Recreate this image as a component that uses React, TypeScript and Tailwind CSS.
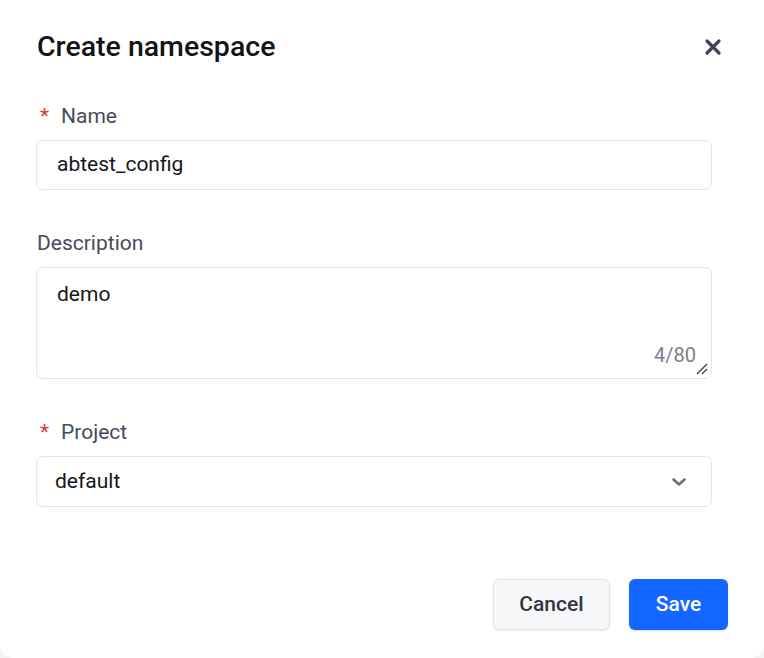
import React from "react";

export default function App() {
  return (
    <div className="w-[764px] h-[658px] bg-[#f3f4f6]" style={{ fontFamily: "Roboto, 'Noto Sans', sans-serif" }}>
      <div className="w-full h-full bg-white rounded-b-[14px] flex flex-col pl-[37px] pr-[52px]">
        <div className="flex items-center justify-between pt-[30px] h-[64px]">
          <h1 className="text-[28.5px] font-medium text-[#111317] leading-none">Create namespace</h1>
          <button className="mr-[-17px] w-[32px] h-[32px] flex items-center justify-center text-[#3f4450]">
            <svg width="18" height="18" viewBox="0 0 18 18" fill="none">
              <path d="M3 3L15 15M15 3L3 15" stroke="currentColor" strokeWidth="3.2" strokeLinecap="round" />
            </svg>
          </button>
        </div>

        <div className="mt-[41px] flex items-center h-[24px] text-[21px] text-[#474b55]">
          <span className="text-[#d93a3a] ml-[3px] mr-[12px]">*</span>
          <span>Name</span>
        </div>
        <div className="mt-[11px] ml-[-1px] h-[50px] border border-[#e3e5e9] rounded-[7px] flex items-center px-[20px] text-[21px] text-[#15171b]">
          abtest_config
        </div>

        <div className="mt-[42px] h-[24px] flex items-center text-[21px] text-[#474b55]">Description</div>
        <div className="mt-[11px] ml-[-1px] h-[112px] border border-[#e3e5e9] rounded-[7px] relative px-[20px] pt-[13px] text-[21px] text-[#15171b]">
          <div className="leading-[26px]">demo</div>
          <div className="absolute right-[15px] bottom-[13px] text-[20px] text-[#7b808a] leading-none">4/80</div>
          <svg className="absolute right-[3px] bottom-[3px]" width="12" height="12" viewBox="0 0 12 12">
            <path d="M11 1L1 11M11 6L6 11" stroke="#3a3d44" strokeWidth="1.3" />
          </svg>
        </div>

        <div className="mt-[42px] flex items-center h-[24px] text-[21px] text-[#474b55]">
          <span className="text-[#d93a3a] ml-[3px] mr-[12px]">*</span>
          <span>Project</span>
        </div>
        <div className="mt-[11px] ml-[-1px] h-[51px] border border-[#e3e5e9] rounded-[7px] flex items-center justify-between pl-[18px] pr-[24px] text-[21px] text-[#15171b]">
          <span>default</span>
          <svg width="16" height="10" viewBox="0 0 16 10" fill="none">
            <path d="M2.5 2.5L8 7.5L13.5 2.5" stroke="#6b7079" strokeWidth="2.6" strokeLinecap="round" strokeLinejoin="round" />
          </svg>
        </div>

        <div className="mt-[72px] flex justify-end gap-[19px] mr-[-16px]">
          <button className="w-[117px] h-[51px] rounded-[6px] bg-[#f6f7f9] border border-[#dfe1e5] shadow-[0_1px_2px_rgba(0,0,0,0.08)] text-[21px] font-medium text-[#33363d]">
            Cancel
          </button>
          <button className="w-[99px] h-[51px] rounded-[6px] bg-[#1366ff] shadow-[0_1px_2px_rgba(0,0,0,0.12)] text-[21px] font-medium text-white">
            Save
          </button>
        </div>
      </div>
    </div>
  );
}
